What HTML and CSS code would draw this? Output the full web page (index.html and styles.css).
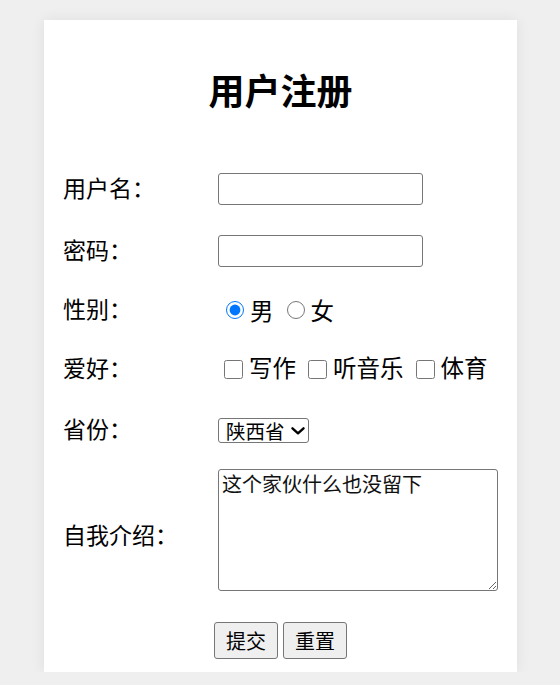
FILE: index.html
```html
<!DOCTYPE html>
<html lang="zh-CN">
<head>
<meta charset="utf-8">
<title>用户注册</title>
<link rel="stylesheet" href="styles.css">
</head>
<body>
<div class="card">
  <h2 class="title">用户注册</h2>
  <form class="form">
    <div class="grid">
      <div class="label r1">用户名：</div>
      <div class="field r1"><input class="text" type="text"></div>

      <div class="label r2">密码：</div>
      <div class="field r2"><input class="text" type="password"></div>

      <div class="label r3">性别：</div>
      <div class="field r3">
        <input class="radio" type="radio" name="sex" checked><span class="opt">男</span>
        <input class="radio" type="radio" name="sex"><span class="opt">女</span>
      </div>

      <div class="label r4">爱好：</div>
      <div class="field r4">
        <input class="check" type="checkbox"><span class="opt">写作</span>
        <input class="check" type="checkbox"><span class="opt">听音乐</span>
        <input class="check" type="checkbox"><span class="opt">体育</span>
      </div>

      <div class="label r5">省份：</div>
      <div class="field r5">
        <span class="select-wrap">
          <select class="select">
            <option>陕西省</option>
            <option>北京市</option>
            <option>上海市</option>
          </select>
          <svg class="chev" width="14" height="8" viewBox="0 0 14 8" aria-hidden="true">
            <path d="M1.5 1.3 L7 6.3 L12.5 1.3" fill="none" stroke="#000" stroke-width="2.4" stroke-linecap="round" stroke-linejoin="round"/>
          </svg>
        </span>
      </div>

      <div class="label r6 label-low">自我介绍：</div>
      <div class="field r6"><textarea class="area">这个家伙什么也没留下</textarea></div>
    </div>
    <div class="buttons">
      <button class="btn" type="submit">提交</button>
      <button class="btn" type="reset">重置</button>
    </div>
  </form>
</div>
</body>
</html>
```

FILE: styles.css
```css
html, body {
  margin: 0;
  padding: 0;
}

body {
  background: #efefef;
  font-family: "Noto Sans CJK SC", "Noto Sans", sans-serif;
  color: #000;
}

.card {
  width: 473px;
  height: 652px;
  box-sizing: border-box;
  margin: 20px 0 0 44px;
  padding: 43px 19px 13px;
  background: #fff;
  box-shadow: 0 0 14px rgba(0, 0, 0, 0.07);
}

.title {
  margin: 0 0 43px;
  font-size: 36px;
  line-height: 52px;
  font-weight: bold;
  text-align: center;
}

.form {
  margin: 0;
}

.grid {
  display: grid;
  grid-template-columns: 155px 1fr;
  grid-template-rows: 62px 62px 56px 62px 60px 140px;
  align-items: center;
}

.label {
  font-size: 23px;
  margin-bottom: 4px;
}

.label-low {
  margin-bottom: 0;
  padding-top: 8px;
}

.field {
  display: flex;
  align-items: center;
  font-size: 23.5px;
}

.text {
  width: 205px;
  height: 32px;
  box-sizing: border-box;
  margin: 0;
  padding: 1px 3px;
  border: 1px solid #767676;
  border-radius: 3px;
  font-size: 20px;
  font-family: "Noto Sans CJK SC", sans-serif;
}

.radio {
  width: 18px;
  height: 18px;
  margin: 0 6px 0 8px;
}

.radio + .opt + .radio {
  margin-left: 13px;
}

.check {
  width: 19px;
  height: 19px;
  margin: 0 6px 0 6px;
}

.opt + .check {
  margin-left: 12px;
}

.opt {
  line-height: 30px;
}

.check + .opt {
  margin-bottom: 4px;
}

.select-wrap {
  position: relative;
  display: inline-block;
  width: 91px;
  height: 25px;
}

.select {
  appearance: none;
  -webkit-appearance: none;
  display: block;
  width: 91px;
  height: 25px;
  box-sizing: border-box;
  margin: 0;
  padding: 0 0 0 7px;
  font-size: 19.5px;
  line-height: 23px;
  font-family: "Noto Sans CJK SC", sans-serif;
  color: #000;
  border: 1px solid #767676;
  border-radius: 3px;
  background-color: #fff;
}

.chev {
  position: absolute;
  left: 73px;
  top: 9px;
  pointer-events: none;
}

.area {
  display: block;
  width: 280px;
  height: 122px;
  box-sizing: border-box;
  margin: 0;
  padding: 2px 3px;
  border: 1px solid #767676;
  border-radius: 3px;
  font-size: 20px;
  line-height: 24px;
  font-family: "Noto Sans CJK SC", sans-serif;
  color: #111;
}

.buttons {
  display: flex;
  justify-content: center;
  gap: 5px;
  margin-top: 22px;
}

.btn {
  width: 64px;
  height: 37px;
  margin: 0;
  padding: 0;
  font-size: 20px;
  line-height: 24px;
  font-family: "Noto Sans CJK SC", sans-serif;
  color: #000;
  background: #efefef;
  border: 1px solid #767676;
  border-radius: 3px;
}
```
